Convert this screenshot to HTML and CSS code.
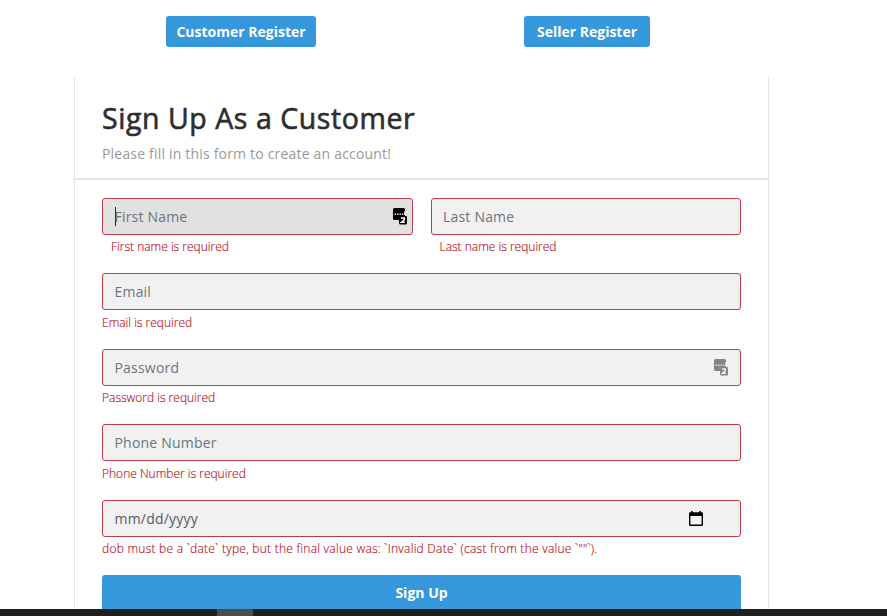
FILE: index.html
```
<!DOCTYPE html>
<html lang="en">
<head>
<meta charset="utf-8">
<title>Sign Up</title>
<link rel="stylesheet" href="styles.css">
</head>
<body>
<div class="page">
  <nav class="switcher">
    <div class="half"><button class="btn customer">Customer Register</button></div>
    <div class="half"><button class="btn seller">Seller Register</button></div>
  </nav>
  <main class="card">
    <header class="head">
      <h2>Sign Up As a Customer</h2>
      <p>Please fill in this form to create an account!</p>
    </header>
    <form class="form">
      <div class="row">
        <div class="field inset">
          <div class="control focused"><span class="caret"></span><span class="ph">First Name</span>
            <svg class="key" width="14" height="17" viewBox="0 0 14 17"><path d="M1.500 0h9A1.500 1.500 0 0 1 12 1.500V8h1a1 1 0 0 1 1 1v6.500a1 1 0 0 1-1 1H7.500a1.500 1.500 0 0 1-1.500-1.500V12H1.500A1.500 1.500 0 0 1 0 10.500v-9A1.500 1.500 0 0 1 1.500 0z" fill="currentColor"/><path d="M1.500 5.500H3V7H1.500zM4 5.500h1.500V7H4zM6.500 5.500H8V7H6.500zM9 5.500h1.300V7H9zM11 3.500h1V7h-1z" fill="#ddd"/><path d="M8 10h3.300v1.700L8.500 14.300h3.400" fill="none" stroke="#fff" stroke-width="1.500"/></svg>
          </div>
          <div class="error">First name is required</div>
        </div>
        <div class="field inset">
          <div class="control"><span class="ph">Last Name</span></div>
          <div class="error">Last name is required</div>
        </div>
      </div>
      <div class="field">
        <div class="control"><span class="ph">Email</span></div>
        <div class="error">Email is required</div>
      </div>
      <div class="field">
        <div class="control"><span class="ph">Password</span>
          <svg class="key muted" width="14" height="17" viewBox="0 0 14 17"><path d="M1.500 0h9A1.500 1.500 0 0 1 12 1.500V8h1a1 1 0 0 1 1 1v6.500a1 1 0 0 1-1 1H7.500a1.500 1.500 0 0 1-1.500-1.500V12H1.500A1.500 1.500 0 0 1 0 10.500v-9A1.500 1.500 0 0 1 1.500 0z" fill="currentColor"/><path d="M1.500 5.500H3V7H1.500zM4 5.500h1.500V7H4zM6.500 5.500H8V7H6.500zM9 5.500h1.300V7H9zM11 3.500h1V7h-1z" fill="#ddd"/><path d="M8 10h3.300v1.700L8.500 14.300h3.400" fill="none" stroke="#eee" stroke-width="1.500"/></svg>
        </div>
        <div class="error">Password is required</div>
      </div>
      <div class="field">
        <div class="control"><span class="ph">Phone Number</span></div>
        <div class="error">Phone Number is required</div>
      </div>
      <div class="field">
        <div class="control"><span class="date">mm/dd/yyyy</span>
          <svg class="cal" width="14" height="15" viewBox="0 0 14 15"><path d="M2 0h1.600v1.300h6.800V0H12v1.300h.7A1.300 1.300 0 0 1 14 2.600v11.100a1.300 1.300 0 0 1-1.300 1.300H1.300A1.300 1.300 0 0 1 0 13.700V2.600a1.300 1.300 0 0 1 1.300-1.300H2zM1.400 5v8.600h11.200V5z" fill="#000" fill-rule="evenodd"/></svg>
        </div>
        <div class="error long">dob must be a `date` type, but the final value was: `Invalid Date` (cast from the value `""`).</div>
      </div>
      <button class="btn submit" type="button">Sign Up</button>
    </form>
  </main>
  <footer class="taskbar"><span class="task"></span></footer>
</div>
</body>
</html>
```
FILE: styles.css
```
* { box-sizing: border-box; }
body { margin: 0; background: #fff; font-family: "Open Sans", sans-serif; font-size: 14px; }
.page { height: 616px; overflow: hidden; display: flex; flex-direction: column; }
.switcher { flex: none; height: 77px; padding: 16px 0 0 62px; display: flex; }
.half { width: 358px; display: flex; justify-content: center; }
.half:last-child { width: 334px; }
.btn { border: 0; border-radius: 3px; background: #3598dc; color: #fff; font: 700 14px/20px "Open Sans", sans-serif; padding: 0; }
.customer { width: 150px; height: 31px; }
.seller { width: 126px; height: 31px; }
.card { flex: 1; min-height: 0; width: 695px; margin-left: 74px; border: solid #e6e6e6; border-width: 0 1px; overflow: hidden; }
.head { height: 103px; padding: 24px 27px 0; border-bottom: 2px solid #e3e3e3; }
h2 { margin: 0; font-size: 28.5px; font-weight: 500; line-height: 34px; letter-spacing: 0.56px; color: #2d2d2d; -webkit-text-stroke: 0.6px #2d2d2d; white-space: nowrap; }
.head p { margin: 8px 0 0; line-height: 22px; letter-spacing: 0.19px; color: #999; }
.form { padding: 18px 27px 0; display: flex; flex-direction: column; }
.row { display: flex; gap: 18px; }
.row .field { flex: 1; }
.field { height: 75.4px; }
.control { height: 37px; border: 1px solid #c03a4c; border-radius: 3px; background: #f1f1f1; padding: 0 12px 0 11.5px; display: flex; align-items: center; color: #6c757d; letter-spacing: 0.2px; }
.focused { background: #e1e1e1; }
.caret { width: 1px; height: 19px; margin-right: -1px; background: #224; }
.date { color: #555b60; }
.key { margin-left: auto; margin-right: -7px; color: #000; }
.muted { margin-right: 0; color: #858585; }
.cal { margin-left: auto; margin-right: 25px; }
.error { margin-top: 3.700px; font-size: 12px; font-weight: 300; line-height: 17px; color: #b80d20; -webkit-text-stroke: 0.15px #b80d20; white-space: nowrap; }
.long { letter-spacing: 0.25px; }
.inset .error { padding-left: 9px; margin-top: 3px; }
.submit { height: 36px; flex: none; }
.taskbar { flex: none; height: 7px; background: #1f1f1f; padding-left: 217px; display: flex; }
.task { width: 36px; background: #4d4d4d; }
```
